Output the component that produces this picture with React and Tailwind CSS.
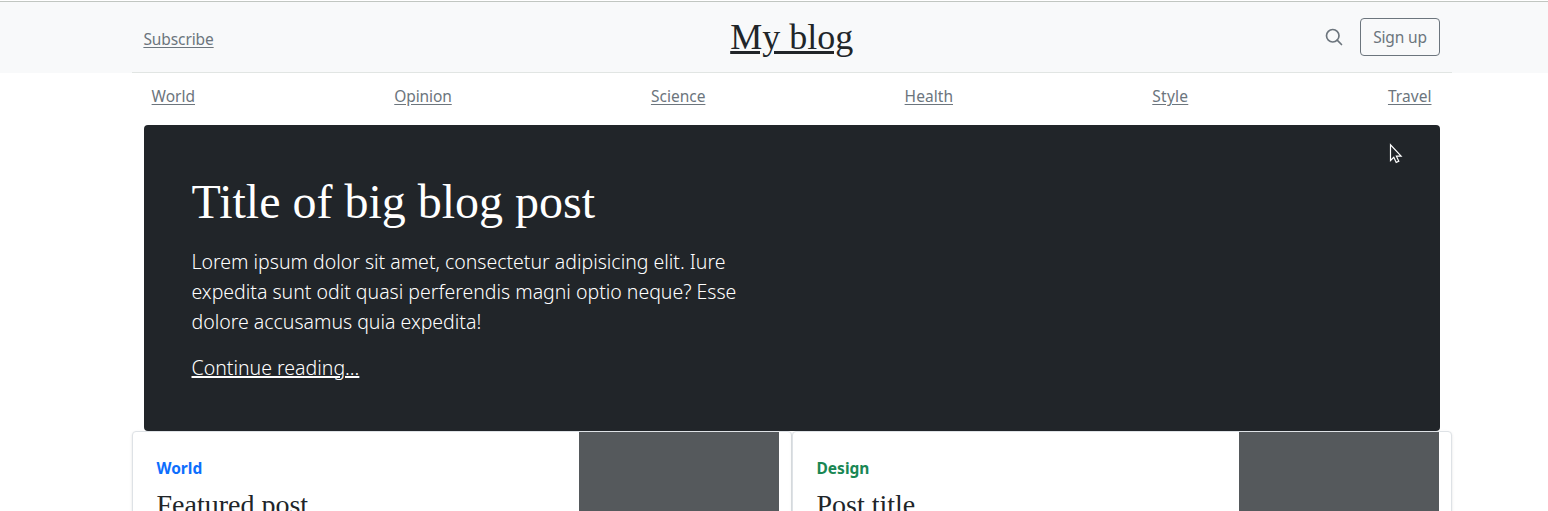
const sections = [
  { name: 'World', width: 'w-[44px]', tracking: 'tracking-[0px]' },
  { name: 'Opinion', width: 'w-[58px]', tracking: 'tracking-[-0.1px]' },
  { name: 'Science', width: 'w-[55px]', tracking: 'tracking-[0px]' },
  { name: 'Health', width: 'w-[49px]', tracking: 'tracking-[0.05px]' },
  { name: 'Style', width: 'w-[37px]', tracking: 'tracking-[0.25px]' },
  { name: 'Travel', width: 'w-[44px]', tracking: 'tracking-[0.05px]' },
];

const posts = [
  { category: 'World', color: 'text-[#0d6efd]', title: 'Featured post' },
  { category: 'Design', color: 'text-[#198754]', title: 'Post title' },
];

function Header() {
  return (
    <header className="border-t border-[#c1c6c1] bg-[#f8f9fa]">
      <div className="ml-[132px] flex h-[71px] w-[1320px] items-center border-b border-[#e1e5e3] pl-[11.4px] pr-3">
        <div className="flex-1 pt-1">
          <a href="#" className="text-[15.5px] leading-6 tracking-[-0.1px] text-[#6c757d] underline underline-offset-2">Subscribe</a>
        </div>
        <a href="#" className="font-['Liberation_Serif',serif] text-4xl leading-[54px] text-[#212529] underline decoration-[3px]">My blog</a>
        <div className="flex flex-1 items-center justify-end">
          <a href="#" aria-label="Search" className="mr-4 text-[#6c757d]">
            <svg className="size-5" viewBox="0 0 24 24" fill="none" stroke="currentColor" strokeWidth="2" strokeLinecap="round" strokeLinejoin="round">
              <circle cx="10.5" cy="10.5" r="7.5" />
              <path d="M21 21l-5.2-5.2" />
            </svg>
          </a>
          <a href="#" className="flex h-[38px] w-20 items-center justify-center whitespace-nowrap rounded border border-[#6c757d] pt-0.5 text-[15.5px] tracking-[-0.15px] text-[#6c757d]">Sign up</a>
        </div>
      </div>
    </header>
  );
}

function PostCard({ post }) {
  return (
    <article className="flex h-[250px] w-[660px] justify-between overflow-hidden rounded border border-[#dee2e6] bg-white pr-3 shadow-sm">
      <div className="flex flex-col py-6 pl-[23.5px]">
        <strong className={`mb-2 text-[15.5px] leading-6 ${post.color}`}>{post.category}</strong>
        <h3 className="font-['Liberation_Serif',serif] text-[28px] leading-[33.6px] text-[#212529]">{post.title}</h3>
      </div>
      <div className="w-[200px] bg-[#55595c]" />
    </article>
  );
}

export default function App() {
  return (
    <div className="h-[511px] overflow-hidden bg-white pt-px font-['Noto_Sans',sans-serif]">
      <Header />
      <nav className="ml-[132px] flex h-[52px] w-[1320px] justify-between pl-[19.6px] pr-5 pt-[11px]">
        {sections.map((s) => (
          <a key={s.name} href="#" className={`whitespace-nowrap text-[15.5px] leading-6 text-[#6c757d] underline underline-offset-2 ${s.width} ${s.tracking}`}>{s.name}</a>
        ))}
      </nav>
      <main className="ml-[132px] w-[1320px]">
        <section className="relative mx-3 h-[306px] rounded bg-[#212529] py-12 pl-[47.5px] text-white">
          <h1 className="font-['Liberation_Serif',serif] text-5xl leading-[57.6px]">Title of big blog post</h1>
          <p className="mb-4 mt-[16.4px] whitespace-nowrap text-[19.5px] font-light leading-[30px] tracking-[-0.01px]">
            Lorem ipsum dolor sit amet, consectetur adipisicing elit. Iure<br />
            expedita sunt odit quasi perferendis magni optio neque? Esse<br />
            dolore accusamus quia expedita!
          </p>
          <a href="#" className="text-[19.5px] font-light leading-[30px] underline decoration-2 underline-offset-1">Continue reading...</a>
          <svg className="absolute left-[1245px] top-[18px] h-[21px] w-[14px]" viewBox="0 0 14 21" fill="#212529" stroke="#fff" strokeWidth="1.2">
            <path d="M1.5 1.8v15.7l3.3-3.2 2.4 5.1 2.6-1.2-2.4-5h4.7z" />
          </svg>
        </section>
        <div className="flex">
          {posts.map((p) => <PostCard key={p.title} post={p} />)}
        </div>
      </main>
    </div>
  );
}
